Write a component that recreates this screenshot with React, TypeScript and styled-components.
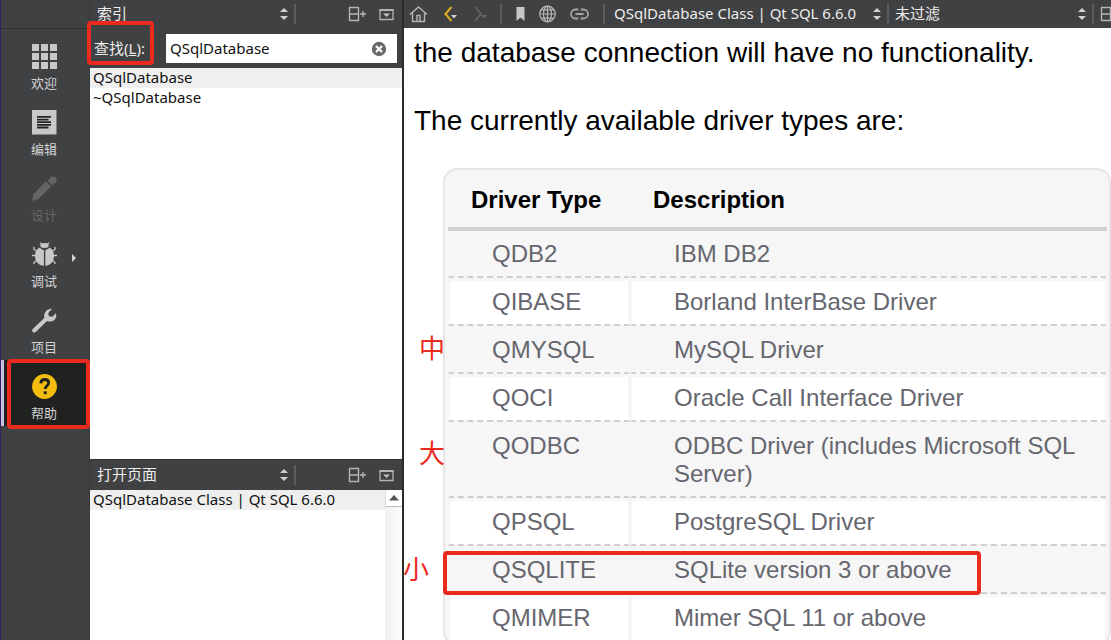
import React from "react";
import styled, { createGlobalStyle, css } from "styled-components";

const UI = `"Noto Sans", "Noto Sans CJK SC", sans-serif`;
const RED = "#ea2a1e";

const Global = createGlobalStyle`
  * { box-sizing: border-box; }
  body { margin: 0; background: #fff; font-family: ${UI}; }
  button, select, input { font-family: inherit; margin: 0; }
`;

const Shell = styled.div`
  display: flex;
  height: 100vh;
  overflow: hidden;
  background: #404142;
`;

const ModeBar = styled.nav`
  flex: none;
  width: 90px;
  display: flex;
  flex-direction: column;
  border-left: 1px solid #35205c;
  border-right: 1px solid #363738;
`;

const ModeTop = styled.div`
  flex: none;
  height: 30px;
  padding-top: 28px;
  &::after { content: ""; display: block; height: 1px; background: #2e2f30; }
`;

const ModeButton = styled.button<{ $active?: boolean }>`
  position: relative;
  flex: none;
  height: 66px;
  padding: 14px 5px 0 0;
  border: 0;
  border-left: 3px solid ${(p) => (p.$active ? "#c9bfe0" : "transparent")};
  background: ${(p) => (p.$active ? "#20221f" : "transparent")};
  color: #d2d3d4;
  font-size: 13px;
  line-height: 16px;
  display: flex;
  flex-direction: column;
  align-items: center;
  gap: 6px;
  &:disabled { color: #646566; }
  svg { display: block; }
`;

const Flyout = styled.span`
  position: absolute;
  left: 68px;
  top: 26px;
  border-left: 4px solid #d2d3d4;
  border-top: 4px solid transparent;
  border-bottom: 4px solid transparent;
`;

const Frame = styled.span`
  position: absolute;
  border: 4px solid ${RED};
  border-radius: 4px;
  pointer-events: none;
  z-index: 2;
`;
const HelpFrame = styled(Frame)`
  left: 3px;
  right: -1px;
  top: -1px;
  bottom: -3px;
`;
const FindFrame = styled(Frame)`
  left: -3px;
  top: -13px;
  width: 67px;
  height: 44px;
`;
const RowFrame = styled(Frame)`
  left: 39px;
  top: 523px;
  width: 538px;
  height: 44px;
`;

const Side = styled.aside`
  flex: none;
  width: 314px;
  display: flex;
  flex-direction: column;
  border-right: 2px solid #2c2b2a;
`;

const Bar = styled.header<{ $tall?: boolean }>`
  flex: none;
  height: ${(p) => (p.$tall ? 31 : 28)}px;
  display: flex;
  align-items: center;
  background: #404142;
  ${(p) => p.$tall && css`border-top: 1px solid #2e2f30;`}
`;

const Picker = styled.label<{ $width?: number }>`
  position: relative;
  display: flex;
  align-items: center;
  ${(p) => (p.$width ? css`flex: none; width: ${p.$width}px;` : css`flex: 1;`)}
  height: 28px;
  padding-right: 6px;
  svg { flex: none; }
`;

const Select = styled.select<{ $inset?: number }>`
  flex: 1;
  min-width: 0;
  appearance: none;
  border: 0;
  padding: 0 0 2px ${(p) => p.$inset ?? 7}px;
  background: transparent;
  color: #ececec;
  font-size: 15px;
  line-height: 24px;
  outline: 0;
`;

const Rule = styled.span`
  flex: none;
  width: 2px;
  height: 20px;
  background: #5c5d5e;
`;

const Tools = styled.div`
  flex: none;
  width: 106px;
  display: flex;
  justify-content: flex-end;
  gap: 12px;
  padding-right: 8px;
`;

const IconButton = styled.button`
  flex: none;
  border: 0;
  padding: 0;
  background: transparent;
  display: flex;
  align-items: center;
  justify-content: center;
`;

const FindRow = styled.div`
  position: relative;
  flex: none;
  display: flex;
  align-items: center;
  height: 40px;
  padding: 6px 5px 5px 0;
`;

const FindLabel = styled.label`
  position: relative;
  flex: none;
  width: 76px;
  padding: 0 0 2px 4px;
  color: #ececec;
  font-size: 15px;
  line-height: 28px;
`;

const FindBox = styled.div`
  flex: 1;
  min-width: 0;
  display: flex;
  align-items: center;
  height: 29px;
  background: #fff;
  padding-right: 10px;
`;

const FindInput = styled.input`
  flex: 1;
  width: 0;
  min-width: 0;
  border: 0;
  outline: 0;
  padding: 0 4px 2px;
  background: transparent;
  color: #111;
  font-size: 15px;
  line-height: 24px;
`;

const List = styled.ul<{ $grow: number }>`
  flex: ${(p) => p.$grow} 1 0;
  min-height: 0;
  margin: 0;
  padding: 0;
  list-style: none;
  background: #fff;
`;

const Entry = styled.li<{ $selected?: boolean }>`
  height: 20px;
  padding-left: 3px;
  background: ${(p) => (p.$selected ? "#efefef" : "#fff")};
  color: #111;
  font-size: 15px;
  line-height: 18px;
  white-space: nowrap;
`;

const OpenPages = styled.div`
  flex: 150 1 0;
  min-height: 0;
  display: flex;
  background: #fff;
`;

const Scroll = styled.div`
  flex: none;
  width: 17px;
  background: linear-gradient(to right, #f0f0f0, #fcfcfc);
`;

const ScrollUp = styled(IconButton)`
  width: 17px;
  height: 17px;
  background: #fff;
  border-left: 1px solid #ddd;
  border-bottom: 1px solid #bbb;
`;

const Main = styled.main`
  flex: 1;
  min-width: 0;
  display: flex;
  flex-direction: column;
  overflow: hidden;
`;

const NavTools = styled.div`
  flex: none;
  width: 96px;
  display: flex;
  align-items: center;
  gap: 15px;
  padding-left: 5px;
`;

const PageTools = styled.div`
  flex: none;
  width: 101px;
  display: flex;
  align-items: center;
  gap: 13px;
  padding-left: 14px;
`;

const SplitSlot = styled.div`
  flex: none;
  width: 17px;
  overflow: hidden;
  display: flex;
  padding-left: 6px;
`;

const Doc = styled.article`
  position: relative;
  flex: 1;
  min-height: 0;
  overflow: hidden;
  background: #fff;
  color: #000;
  font-family: "Liberation Sans", Arial, sans-serif;
  padding: 9px 0 0 39px;
`;

const Para = styled.p`
  margin: 0 0 0 -29px;
  padding-bottom: 36px;
  font-size: 28px;
  line-height: 32px;
  & + & { padding-bottom: 31px; }
`;

const TableBox = styled.div`
  border: 2px solid #e6e6e6;
  border-radius: 14px;
  background: #f6f6f6;
  padding: 0 2px 2px 3px;
`;

const Table = styled.table`
  width: 100%;
  table-layout: fixed;
  border-collapse: separate;
  border-spacing: 0;
  font-size: 24px;
  line-height: 28px;
  text-align: left;
`;

const Th = styled.th<{ $first?: boolean }>`
  ${(p) => p.$first && css`width: 182px;`}
  padding: 16px 0 13px 23px;
  border-bottom: 4px solid #d0d0d0;
  white-space: nowrap;
`;

const Td = styled.td`
  padding: 7px 8px 8px 42px;
  vertical-align: top;
  color: #66666e;
  border: 2px solid #f6f6f6;
  border-top-width: 3px;
  border-bottom: 2px dashed #cfcfcf;
  background-clip: padding-box;
`;

const Tr = styled.tr`
  &:nth-child(even) ${Td} { background-color: #fff; }
  &:first-child ${Td} { border-top-width: 2px; }
`;

const Note = styled.span<{ $x: number; $y: number }>`
  position: absolute;
  left: ${(p) => p.$x}px;
  top: ${(p) => p.$y}px;
  color: ${RED};
  font-family: "Noto Sans CJK SC", sans-serif;
  font-size: 26px;
  line-height: 32px;
`;

const UpDown = () => (
  <svg width="8" height="14" viewBox="0 0 8 14" fill="#d0d1d2" aria-hidden="true">
    <path d="M4 1 8 5H0zM0 9h8l-4 4z" />
  </svg>
);

const SplitIcon = () => (
  <svg width="19" height="16" viewBox="0 0 19 16" fill="none" stroke="#b4b5b6" aria-hidden="true">
    <path d="M1.500 1.500h9v13h-9zM1.500 8h9" strokeWidth="1.400" />
    <path d="M12 8h6M15 5v6" strokeWidth="1.400" />
  </svg>
);

const CloseSplitIcon = () => (
  <svg width="15" height="16" viewBox="0 0 15 16" aria-hidden="true">
    <path d="M1 4h13v9.500H1z" fill="none" stroke="#b4b5b6" strokeWidth="1.300" />
    <path d="M.5 3h14v2H.5z" fill="#b4b5b6" />
    <path d="M4 7.500h7L7.500 11z" fill="#c4c5c6" />
  </svg>
);

const WelcomeIcon = () => (
  <svg width="25" height="25" viewBox="0 0 25 25" fill="#c7c8ca">
    {[0, 9, 18].map((y) => [0, 9, 18].map((x) => <rect key={`${x}-${y}`} x={x} y={y} width="7" height="7" />))}
  </svg>
);

const EditIcon = () => (
  <svg width="25" height="25" viewBox="0 0 25 25">
    <path d="M0 0h24.500v24.500H0z" fill="#c7c8ca" />
    <path d="M5 6h14v1.800H5zM5 8.700h11.500v1.800H5zM5 11.300h14v1.800H5zM5 14h14v1.800H5zM5 16.600h11.500v1.800H5z" fill="#242526" />
  </svg>
);

const DesignIcon = () => (
  <svg width="25" height="25" viewBox="0 0 25 25" fill="#646566">
    <path d="M0 25 1.500 18 14 5.500l5 5L6.500 23zM15.500 4.500l1-1 5 5-1 1z" />
    <circle cx="21" cy="4" r="3.600" />
  </svg>
);

const DebugIcon = () => (
  <svg width="25" height="25" viewBox="0 0 25 25">
    <ellipse cx="12.500" cy="3.600" rx="4.200" ry="2.500" fill="#c7c8ca" />
    <path d="M9.500 2 8 .8M15.500 2 17 .8M4.500 9 2 7.500V5M20.500 9 23 7.500V5M4 13.500H0M21 13.500h4M4.500 18.500 2 20.500V22M20.500 18.500l2.500 2V22" fill="none" stroke="#c7c8ca" strokeWidth="1.300" />
    <path d="M11.900 8v15.800C6 23.300 3 19 3 14c0-4 1.500-7 4.500-8.500C9 7 10.500 7.700 11.900 8zM13.300 8v15.800C19 23.300 22 19 22 14c0-4-1.500-7-4.500-8.500-1.300 1.500-2.800 2.200-4.200 2.500z" fill="#c7c8ca" />
  </svg>
);

const ProjectIcon = () => (
  <svg width="25" height="25" viewBox="0 0 25 25" fill="#c7c8ca">
    <path d="M20 .7 16.300 5l.5 3.200 3.400.6L24 5.200c1.200 4-1.500 8.300-6 8.300-1.200 0-2.200-.2-3-.6L4 23.800c-1 1-2.300 1-3.200.2s-.8-2.300.2-3.200L12.300 10c-1-5 2.700-10 7.700-9.300z" />
  </svg>
);

const HelpIcon = () => (
  <svg width="25" height="25" viewBox="0 0 25 25">
    <circle cx="12.500" cy="12.500" r="12.400" fill="#f2bd0c" />
    <path d="M8.700 9.300C8.900 6.700 10.300 5.500 12.700 5.500c2.300 0 4 1.300 4 3.300 0 2.800-3.500 3.100-3.500 6.200" fill="none" stroke="#20221f" strokeWidth="2.800" />
    <path d="M11.700 17.300h3v2.900h-3z" fill="#20221f" />
  </svg>
);

const modes = [
  { label: "欢迎", icon: <WelcomeIcon /> },
  { label: "编辑", icon: <EditIcon /> },
  { label: "设计", icon: <DesignIcon />, disabled: true },
  { label: "调试", icon: <DebugIcon />, flyout: true },
  { label: "项目", icon: <ProjectIcon /> },
  { label: "帮助", icon: <HelpIcon />, active: true },
];

const drivers = [
  ["QDB2", "IBM DB2"],
  ["QIBASE", "Borland InterBase Driver"],
  ["QMYSQL", "MySQL Driver"],
  ["QOCI", "Oracle Call Interface Driver"],
  ["QODBC", "ODBC Driver (includes Microsoft SQL Server)"],
  ["QPSQL", "PostgreSQL Driver"],
  ["QSQLITE", "SQLite version 3 or above"],
  ["QMIMER", "Mimer SQL 11 or above"],
];

function PanelHeader({ title, tall }: { title: string; tall?: boolean }) {
  return (
    <Bar $tall={tall}>
      <Picker>
        <Select aria-label={title}><option>{title}</option></Select>
        <UpDown />
      </Picker>
      <Rule />
      <Tools>
        <IconButton aria-label="Split"><SplitIcon /></IconButton>
        <IconButton aria-label="Close"><CloseSplitIcon /></IconButton>
      </Tools>
    </Bar>
  );
}

export default function App() {
  return (
    <>
      <Global />
      <Shell>
        <ModeBar>
          <ModeTop />
          {modes.map((m) => (
            <ModeButton key={m.label} $active={m.active} disabled={m.disabled}>
              {m.icon}
              <span>{m.label}</span>
              {m.flyout && <Flyout />}
              {m.active && <HelpFrame />}
            </ModeButton>
          ))}
        </ModeBar>
        <Side>
          <PanelHeader title="索引" />
          <FindRow>
            <FindLabel htmlFor="find">
              查找(<u>L</u>):
              <FindFrame />
            </FindLabel>
            <FindBox>
              <FindInput id="find" defaultValue="QSqlDatabase" />
              <IconButton aria-label="Clear">
                <svg width="16" height="16" viewBox="0 0 16 16">
                  <circle cx="8" cy="8" r="7.200" fill="#68696a" />
                  <path d="m5 5 6 6m0-6-6 6" stroke="#fff" strokeWidth="2.200" />
                </svg>
              </IconButton>
            </FindBox>
          </FindRow>
          <List $grow={391}>
            <Entry $selected>QSqlDatabase</Entry>
            <Entry>~QSqlDatabase</Entry>
          </List>
          <PanelHeader title="打开页面" tall />
          <OpenPages>
            <List $grow={1}>
              <Entry $selected>QSqlDatabase Class | Qt SQL 6.6.0</Entry>
            </List>
            <Scroll>
              <ScrollUp aria-label="Scroll up">
                <svg width="10" height="6" viewBox="0 0 10 6"><path d="m5 0 5 5.500H0z" fill="#555" /></svg>
              </ScrollUp>
            </Scroll>
          </OpenPages>
        </Side>
        <Main>
          <Bar>
            <NavTools>
              <IconButton aria-label="Home">
                <svg width="19" height="18" viewBox="0 0 19 18" fill="none" stroke="#b4b5b6" strokeWidth="1.400">
                  <path d="M1 9.500 9.500 2 18 9.500M3.500 8v8.500h12V8M8 16.500v-6h3v6" />
                </svg>
              </IconButton>
              <IconButton aria-label="Back">
                <svg width="15" height="18" viewBox="0 0 15 18">
                  <path d="M8.500 2 2.500 9l6 7" fill="none" stroke="#d6a91c" strokeWidth="2.200" />
                  <path d="M8 10h6l-3 3.500z" fill="#d0d1d2" />
                </svg>
              </IconButton>
              <IconButton aria-label="Forward" disabled>
                <svg width="15" height="18" viewBox="0 0 15 18">
                  <path d="m2 2 6 7-6 7" fill="none" stroke="#646566" strokeWidth="1.800" />
                  <path d="M8 10h6l-3 3.500z" fill="#646566" />
                </svg>
              </IconButton>
            </NavTools>
            <Rule />
            <PageTools>
              <IconButton aria-label="Bookmark">
                <svg width="9" height="16" viewBox="0 0 9 16"><path d="M.5 1h8v14l-4-3.500-4 3.500z" fill="#c7c8ca" /></svg>
              </IconButton>
              <IconButton aria-label="Open in browser">
                <svg width="19" height="18" viewBox="0 0 19 18" fill="none" stroke="#b4b5b6" strokeWidth="1.200">
                  <circle cx="9.500" cy="9" r="7.800" />
                  <ellipse cx="9.500" cy="9" rx="4" ry="7.800" />
                  <path d="M9.500 1v16M1.500 9h16M3 4.800h13M3 13.200h13" />
                </svg>
              </IconButton>
              <IconButton aria-label="Copy link">
                <svg width="19" height="12" viewBox="0 0 19 12" fill="none" stroke="#a4a5a6" strokeWidth="1.800">
                  <path d="M8.300 1.500H5.500a4.500 4.500 0 0 0 0 9h2.800M10.700 1.500h2.800a4.500 4.500 0 0 1 0 9h-2.800M5.500 6h8" />
                </svg>
              </IconButton>
            </PageTools>
            <Rule />
            <Picker $width={282}>
              <Select aria-label="Page" $inset={9}><option>QSqlDatabase Class | Qt SQL 6.6.0</option></Select>
              <UpDown />
            </Picker>
            <Rule />
            <Picker>
              <Select aria-label="Filter" $inset={6}><option>未过滤</option></Select>
              <UpDown />
            </Picker>
            <Rule />
            <SplitSlot><IconButton aria-label="Split"><SplitIcon /></IconButton></SplitSlot>
          </Bar>
          <Doc>
            <Para>the database connection will have no functionality.</Para>
            <Para>The currently available driver types are:</Para>
            <TableBox>
              <Table>
                <thead>
                  <tr><Th $first>Driver Type</Th><Th>Description</Th></tr>
                </thead>
                <tbody>
                  {drivers.map(([type, text]) => (
                    <Tr key={type}><Td>{type}</Td><Td>{text}</Td></Tr>
                  ))}
                </tbody>
              </Table>
            </TableBox>
            <Note $x={15} $y={303}>中</Note>
            <Note $x={15} $y={408}>大</Note>
            <Note $x={-1} $y={524}>小</Note>
            <RowFrame />
          </Doc>
        </Main>
      </Shell>
    </>
  );
}
